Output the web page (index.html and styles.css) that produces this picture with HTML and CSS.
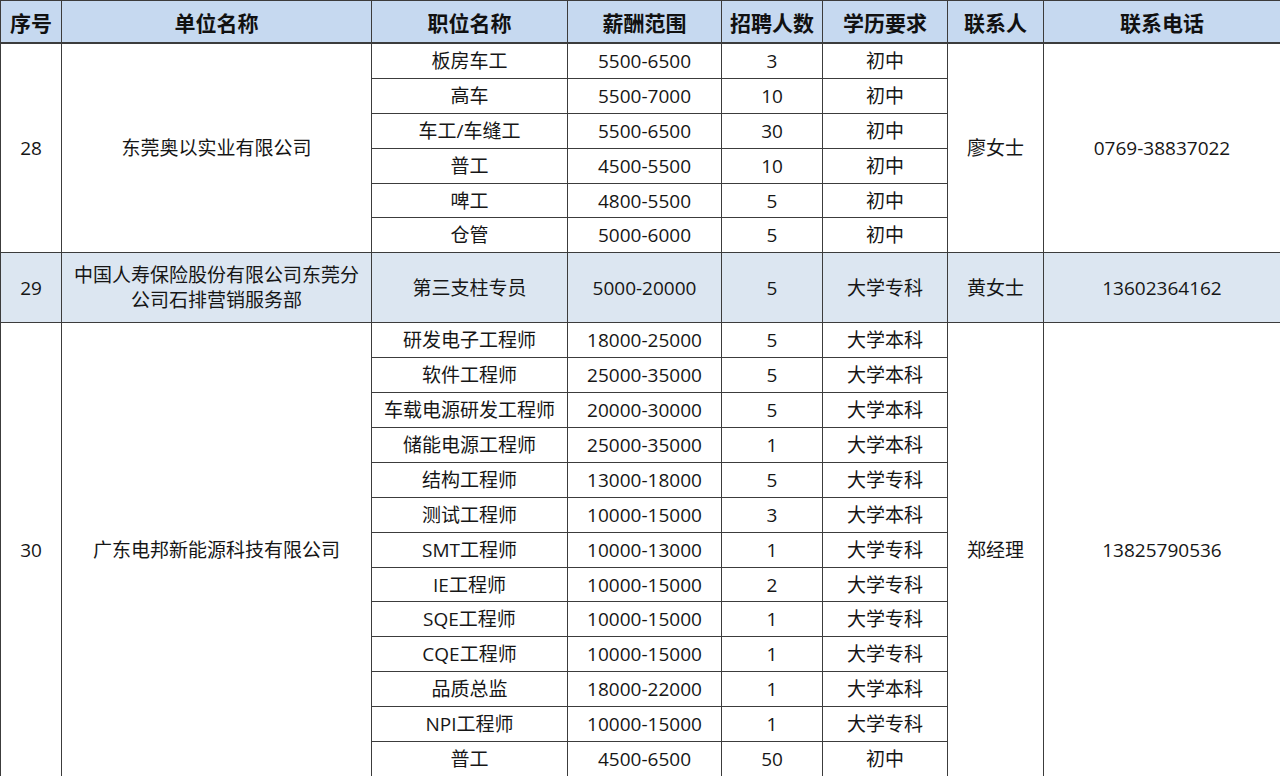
FILE: index.html
```html
<!DOCTYPE html>
<html lang="zh-CN">
<head>
<meta charset="utf-8">
<link rel="stylesheet" href="styles.css">
</head>
<body>
<table class="jobs">
<colgroup>
<col class="c1"><col class="c2"><col class="c3"><col class="c4"><col class="c5"><col class="c6"><col class="c7"><col class="c8">
</colgroup>
<thead>
<tr class="head"><th>序号</th><th>单位名称</th><th>职位名称</th><th>薪酬范围</th><th>招聘人数</th><th>学历要求</th><th>联系人</th><th>联系电话</th></tr>
</thead>
<tbody>
<tr><td rowspan="6">28</td><td rowspan="6">东莞奥以实业有限公司</td><td>板房车工</td><td>5500-6500</td><td class="lt">3</td><td>初中</td><td rowspan="6">廖女士</td><td rowspan="6" class="lt">0769-38837022</td></tr>
<tr><td>高车</td><td>5500-7000</td><td class="lt">10</td><td>初中</td></tr>
<tr><td>车工/车缝工</td><td>5500-6500</td><td class="lt">30</td><td>初中</td></tr>
<tr><td>普工</td><td>4500-5500</td><td class="lt">10</td><td>初中</td></tr>
<tr><td>啤工</td><td>4800-5500</td><td class="lt">5</td><td>初中</td></tr>
<tr><td>仓管</td><td>5000-6000</td><td class="lt">5</td><td>初中</td></tr>
<tr class="alt"><td>29</td><td class="multi">中国人寿保险股份有限公司东莞分<br>公司石排营销服务部</td><td>第三支柱专员</td><td>5000-20000</td><td class="lt">5</td><td>大学专科</td><td>黄女士</td><td class="lt">13602364162</td></tr>
<tr><td rowspan="13">30</td><td rowspan="13">广东电邦新能源科技有限公司</td><td>研发电子工程师</td><td>18000-25000</td><td class="lt">5</td><td>大学本科</td><td rowspan="13">郑经理</td><td rowspan="13" class="lt">13825790536</td></tr>
<tr><td>软件工程师</td><td>25000-35000</td><td class="lt">5</td><td>大学本科</td></tr>
<tr><td>车载电源研发工程师</td><td>20000-30000</td><td class="lt">5</td><td>大学本科</td></tr>
<tr><td>储能电源工程师</td><td>25000-35000</td><td class="lt">1</td><td>大学本科</td></tr>
<tr><td>结构工程师</td><td>13000-18000</td><td class="lt">5</td><td>大学专科</td></tr>
<tr><td>测试工程师</td><td>10000-15000</td><td class="lt">3</td><td>大学本科</td></tr>
<tr><td>SMT工程师</td><td>10000-13000</td><td class="lt">1</td><td>大学专科</td></tr>
<tr><td>IE工程师</td><td>10000-15000</td><td class="lt">2</td><td>大学专科</td></tr>
<tr><td>SQE工程师</td><td>10000-15000</td><td class="lt">1</td><td>大学专科</td></tr>
<tr><td>CQE工程师</td><td>10000-15000</td><td class="lt">1</td><td>大学专科</td></tr>
<tr><td>品质总监</td><td>18000-22000</td><td class="lt">1</td><td>大学本科</td></tr>
<tr><td>NPI工程师</td><td>10000-15000</td><td class="lt">1</td><td>大学专科</td></tr>
<tr><td>普工</td><td>4500-6500</td><td class="lt">50</td><td>初中</td></tr>
</tbody>
</table>
</body>
</html>
```
FILE: styles.css
```css
html, body {
  margin: 0;
  padding: 0;
  background: #ffffff;
}
body {
  font-family: "Open Sans", "Noto Sans CJK SC", sans-serif;
  color: #161616;
}
.jobs {
  width: 1280px;
  border-collapse: collapse;
  table-layout: fixed;
}
.c1 { width: 61px; }
.c2 { width: 310px; }
.c3 { width: 196px; }
.c4 { width: 154px; }
.c5 { width: 101px; }
.c6 { width: 125px; }
.c7 { width: 96px; }
.c8 { width: 237px; }
.jobs th, .jobs td {
  border: 1px solid #3c3c3c;
  text-align: center;
  vertical-align: middle;
  padding: 0;
  white-space: nowrap;
}
.jobs th {
  height: 41px;
  background: #c6d9f0;
  font-family: "Noto Sans CJK SC", sans-serif;
  font-weight: 700;
  font-size: 21px;
  line-height: 26px;
  color: #111;
  border-bottom: 2px solid #3c3c3c;
}
.jobs td {
  height: 33.9px;
  font-size: 19px;
  line-height: 22px;
}
.jobs td.lt {
  border-left-color: #9a9a9a;
}
.jobs tr.alt td {
  background: #dce6f1;
  height: 69px;
}
.jobs td.multi {
  white-space: normal;
  line-height: 25px;
}
```
